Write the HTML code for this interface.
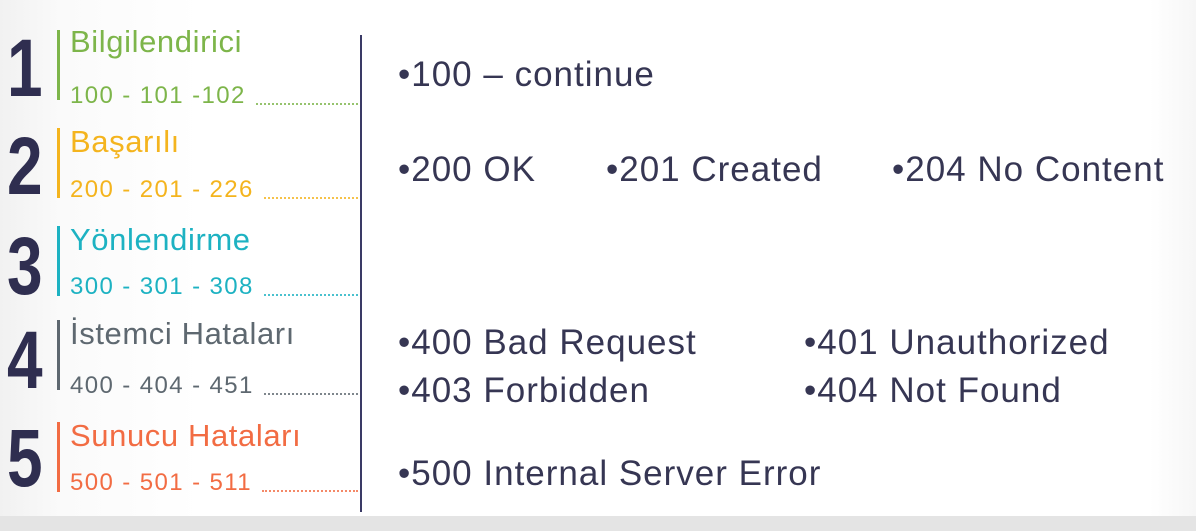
<!DOCTYPE html>
<html><head><meta charset="utf-8"><style>
html,body{margin:0;padding:0}
body{width:1196px;height:531px;overflow:hidden;position:relative;background:linear-gradient(90deg,#f1f1f1 0,#fafafa 60px,#fff 200px,#fff 1150px,#f6f6f6 1196px);font-family:"Liberation Sans",sans-serif}
.bot{position:absolute;left:0;right:0;top:516px;height:15px;background:#e4e4e4}
.n{position:absolute;left:7px;font-weight:bold;font-size:82px;color:#2f2e50;transform:scaleX(0.78);transform-origin:left top;line-height:1}
.bar{position:absolute;left:57px;width:3px;height:70px}
.t{position:absolute;left:70px;font-size:31px;line-height:1;white-space:nowrap;letter-spacing:0.6px}
.c{position:absolute;left:70px;width:288px;display:flex;align-items:flex-end;font-size:24px;line-height:1;white-space:nowrap;letter-spacing:1.4px}
.c i{flex:1;margin-left:10px;margin-bottom:3px;border-bottom:2px dotted currentColor;opacity:.8}
.v{position:absolute;left:360px;top:35px;width:2px;height:477px;background:#3a3a66}
.r{position:absolute;font-size:35px;color:#363653;line-height:1;white-space:nowrap;letter-spacing:1px}
</style></head><body>
<div class="bot"></div>
<div class="n" style="top:28px">1</div>
<div class="bar" style="top:30px;background:#7db54a"></div>
<div class="t" style="top:26px;color:#7db54a">Bilgilendirici</div>
<div class="c" style="top:84px;color:#7db54a">100 - 101 -102<i></i></div>
<div class="n" style="top:126px">2</div>
<div class="bar" style="top:128px;background:#f4b41e"></div>
<div class="t" style="top:126px;color:#f4b41e">Başarılı</div>
<div class="c" style="top:178px;color:#f4b41e">200 - 201 - 226<i></i></div>
<div class="n" style="top:226px">3</div>
<div class="bar" style="top:226px;background:#1db2c2"></div>
<div class="t" style="top:224px;color:#1db2c2">Yönlendirme</div>
<div class="c" style="top:275px;color:#1db2c2">300 - 301 - 308<i></i></div>
<div class="n" style="top:320px">4</div>
<div class="bar" style="top:320px;background:#5e6870"></div>
<div class="t" style="top:318px;color:#5e6870">İstemci Hataları</div>
<div class="c" style="top:374px;color:#5e6870">400 - 404 - 451<i></i></div>
<div class="n" style="top:418px">5</div>
<div class="bar" style="top:422px;background:#f26c43"></div>
<div class="t" style="top:420px;color:#f26c43">Sunucu Hataları</div>
<div class="c" style="top:471px;color:#f26c43">500 - 501 - 511<i></i></div>
<div class="v"></div>
<div class="r" style="left:398px;top:57px">•100 – continue</div>
<div class="r" style="left:398px;top:152px">•200 OK</div>
<div class="r" style="left:606px;top:152px">•201 Created</div>
<div class="r" style="left:892px;top:152px">•204 No Content</div>
<div class="r" style="left:398px;top:325px">•400 Bad Request</div>
<div class="r" style="left:804px;top:325px">•401 Unauthorized</div>
<div class="r" style="left:398px;top:373px">•403 Forbidden</div>
<div class="r" style="left:804px;top:373px">•404 Not Found</div>
<div class="r" style="left:398px;top:456px">•500 Internal Server Error</div>
</body></html>
